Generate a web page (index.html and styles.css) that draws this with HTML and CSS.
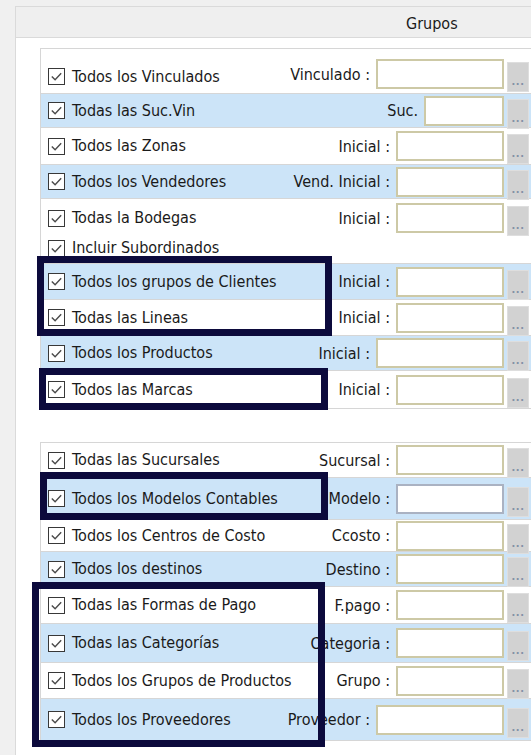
FILE: index.html
```html
<!DOCTYPE html>
<html lang="es">
<head>
    <meta charset="UTF-8">
    <meta name="viewport" content="width=device-width, initial-scale=1.0">
    <title>Grupos</title>
    <link rel="stylesheet" href="styles.css">
</head>
<body>
    <div class="page">
        <div class="panel">
            <div class="panel-head">Grupos</div>
            <div class="panel-body">

                <!-- filtros de terceros / productos -->
                <div class="group">
                    <div class="row h44 first">
                        <label class="chk"><span class="box"><svg viewBox="0 0 16 16"><polyline points="3,8 6.5,11.5 13,4.5"/></svg></span>Todos los Vinculados</label>
                        <div class="field"><span class="cap">Vinculado :</span><span class="input wide"></span><span class="btn">...</span></div>
                    </div>
                    <div class="row h34">
                        <label class="chk"><span class="box"><svg viewBox="0 0 16 16"><polyline points="3,8 6.5,11.5 13,4.5"/></svg></span>Todas las Suc.Vin</label>
                        <div class="field"><span class="cap">Suc.</span><span class="input short"></span><span class="btn">...</span></div>
                    </div>
                    <div class="row h37">
                        <label class="chk"><span class="box"><svg viewBox="0 0 16 16"><polyline points="3,8 6.5,11.5 13,4.5"/></svg></span>Todos las Zonas</label>
                        <div class="field"><span class="cap">Inicial :</span><span class="input"></span><span class="btn">...</span></div>
                    </div>
                    <div class="row h34">
                        <label class="chk"><span class="box"><svg viewBox="0 0 16 16"><polyline points="3,8 6.5,11.5 13,4.5"/></svg></span>Todos los Vendedores</label>
                        <div class="field"><span class="cap">Vend. Inicial :</span><span class="input"></span><span class="btn">...</span></div>
                    </div>
                    <div class="row stack">
                        <div class="sub">
                            <label class="chk"><span class="box"><svg viewBox="0 0 16 16"><polyline points="3,8 6.5,11.5 13,4.5"/></svg></span>Todas la Bodegas</label>
                            <div class="field"><span class="cap">Inicial :</span><span class="input"></span><span class="btn">...</span></div>
                        </div>
                        <label class="chk extra"><span class="box"><svg viewBox="0 0 16 16"><polyline points="3,8 6.5,11.5 13,4.5"/></svg></span>Incluir Subordinados</label>
                    </div>
                    <div class="row h36">
                        <label class="chk"><span class="box"><svg viewBox="0 0 16 16"><polyline points="3,8 6.5,11.5 13,4.5"/></svg></span>Todos los grupos de Clientes</label>
                        <div class="field"><span class="cap">Inicial :</span><span class="input"></span><span class="btn">...</span></div>
                    </div>
                    <div class="row h36">
                        <label class="chk"><span class="box"><svg viewBox="0 0 16 16"><polyline points="3,8 6.5,11.5 13,4.5"/></svg></span>Todas las Lineas</label>
                        <div class="field"><span class="cap">Inicial :</span><span class="input"></span><span class="btn">...</span></div>
                    </div>
                    <div class="row h35">
                        <label class="chk"><span class="box"><svg viewBox="0 0 16 16"><polyline points="3,8 6.5,11.5 13,4.5"/></svg></span>Todos los Productos</label>
                        <div class="field"><span class="cap">Inicial :</span><span class="input wide"></span><span class="btn">...</span></div>
                    </div>
                    <div class="row h38">
                        <label class="chk"><span class="box"><svg viewBox="0 0 16 16"><polyline points="3,8 6.5,11.5 13,4.5"/></svg></span>Todos las Marcas</label>
                        <div class="field"><span class="cap">Inicial :</span><span class="input"></span><span class="btn">...</span></div>
                    </div>
                </div>

                <!-- filtros contables -->
                <div class="group">
                    <div class="row h34 first">
                        <label class="chk"><span class="box"><svg viewBox="0 0 16 16"><polyline points="3,8 6.5,11.5 13,4.5"/></svg></span>Todas las Sucursales</label>
                        <div class="field"><span class="cap">Sucursal :</span><span class="input"></span><span class="btn">...</span></div>
                    </div>
                    <div class="row h42">
                        <label class="chk"><span class="box"><svg viewBox="0 0 16 16"><polyline points="3,8 6.5,11.5 13,4.5"/></svg></span>Todos los Modelos Contables</label>
                        <div class="field"><span class="cap">Modelo :</span><span class="input focus"></span><span class="btn">...</span></div>
                    </div>
                    <div class="row h32">
                        <label class="chk"><span class="box"><svg viewBox="0 0 16 16"><polyline points="3,8 6.5,11.5 13,4.5"/></svg></span>Todos los Centros de Costo</label>
                        <div class="field"><span class="cap">Ccosto :</span><span class="input"></span><span class="btn">...</span></div>
                    </div>
                    <div class="row h35">
                        <label class="chk"><span class="box"><svg viewBox="0 0 16 16"><polyline points="3,8 6.5,11.5 13,4.5"/></svg></span>Todos los destinos</label>
                        <div class="field"><span class="cap">Destino :</span><span class="input"></span><span class="btn">...</span></div>
                    </div>
                    <div class="row h37">
                        <label class="chk"><span class="box"><svg viewBox="0 0 16 16"><polyline points="3,8 6.5,11.5 13,4.5"/></svg></span>Todas las Formas de Pago</label>
                        <div class="field"><span class="cap">F.pago :</span><span class="input"></span><span class="btn">...</span></div>
                    </div>
                    <div class="row h39">
                        <label class="chk"><span class="box"><svg viewBox="0 0 16 16"><polyline points="3,8 6.5,11.5 13,4.5"/></svg></span>Todas las Categorías</label>
                        <div class="field"><span class="cap">Categoria :</span><span class="input"></span><span class="btn">...</span></div>
                    </div>
                    <div class="row h36">
                        <label class="chk"><span class="box"><svg viewBox="0 0 16 16"><polyline points="3,8 6.5,11.5 13,4.5"/></svg></span>Todos los Grupos de Productos</label>
                        <div class="field"><span class="cap">Grupo :</span><span class="input"></span><span class="btn">...</span></div>
                    </div>
                    <div class="row h42">
                        <label class="chk"><span class="box"><svg viewBox="0 0 16 16"><polyline points="3,8 6.5,11.5 13,4.5"/></svg></span>Todos los Proveedores</label>
                        <div class="field"><span class="cap">Proveedor :</span><span class="input wide"></span><span class="btn">...</span></div>
                    </div>
                </div>

            </div>
        </div>

        <!-- recuadros de resaltado -->
        <div class="mark m1"></div>
        <div class="mark m2"></div>
        <div class="mark m3"></div>
        <div class="mark m4"></div>
    </div>
</body>
</html>
```

FILE: styles.css
```css
:root {
    --page-bg: #f0f0f0;
    --line: #d6d6d6;
    --row-blue: #cce4f8;
    --text: #1a1a1a;
    --mark: #0c0a3c;
}

* {
    margin: 0;
    padding: 0;
    box-sizing: border-box;
}

body {
    background: var(--page-bg);
    font-family: "DejaVu Sans Condensed", "DejaVu Sans", sans-serif;
    font-stretch: condensed;
    font-size: 16px;
    color: var(--text);
    overflow: hidden;
}

.page {
    position: relative;
    width: 531px;
    height: 755px;
    overflow: hidden;
}

.panel {
    margin: 6px 0 0 15px;
    width: 620px;
    border: 1px solid #dadada;
    border-right: none;
}

.panel-head {
    height: 31px;
    padding: 2px 0 0 390px;
    line-height: 29px;
    background: #efefef;
    border-bottom: 1px solid #dadada;
}

.panel-body {
    background: white;
    padding: 10px 0 40px 24px;
}

.group {
    width: 520px;
    border: 1px solid var(--line);
    background: white;
}

.group + .group {
    margin-top: 33px;
}

.row {
    display: flex;
    align-items: center;
    justify-content: space-between;
    padding: 0 30px 0 7px;
    border-top: 1px solid var(--line);
}

.row.first {
    border-top: none;
}

.row:nth-child(even) {
    background: var(--row-blue);
}

.h32 { height: 32px; }
.h34 { height: 34px; }
.h35 { height: 35px; }
.h36 { height: 36px; }
.h37 { height: 37px; }
.h38 { height: 38px; }
.h39 { height: 39px; }
.h42 { height: 42px; }
.h44 { height: 44px; padding-top: 6px; }

.h44 .chk {
    margin-top: 5px;
}

/* bodegas + subordinados comparten fila */
.row.stack {
    display: block;
    height: 65px;
    padding-right: 0;
}

.stack .sub {
    display: flex;
    align-items: center;
    justify-content: space-between;
    height: 38px;
    padding-right: 30px;
}

.chk {
    display: flex;
    align-items: center;
    gap: 7px;
    white-space: nowrap;
    line-height: 20px;
}

.chk.extra {
    height: 22px;
}

.box {
    width: 17px;
    height: 17px;
    border: 1px solid #383838;
    background: white;
    flex-shrink: 0;
}

.box svg {
    display: block;
    width: 15px;
    height: 15px;
    fill: none;
    stroke: #4a4a4a;
    stroke-width: 1.5;
}

.field {
    display: flex;
    align-items: center;
}

.cap {
    white-space: nowrap;
    margin-right: 6px;
}

.input {
    width: 108px;
    height: 30px;
    background: white;
    border: 2px solid #cdc9a6;
}

.input.wide {
    width: 128px;
}

.input.short {
    width: 80px;
}

.input.focus {
    border-color: #aab2c2;
}

.btn {
    display: flex;
    align-items: flex-end;
    justify-content: center;
    width: 22px;
    height: 30px;
    margin: 6px 0 0 3px;
    padding-bottom: 4px;
    background: #d2d2d2;
    border: 1px solid #dedede;
    color: #8391a6;
    font-size: 11px;
    font-weight: bold;
    letter-spacing: 0.5px;
    line-height: 10px;
}

/* recuadros oscuros sobre las filas */
.mark {
    position: absolute;
    border: 7px solid var(--mark);
}

.m1 { left: 37px; top: 256px; width: 295px; height: 80px; }
.m2 { left: 39px; top: 368px; width: 289px; height: 42px; }
.m3 { left: 40px; top: 472px; width: 288px; height: 48px; }
.m4 { left: 32px; top: 582px; width: 293px; height: 165px; }
```
